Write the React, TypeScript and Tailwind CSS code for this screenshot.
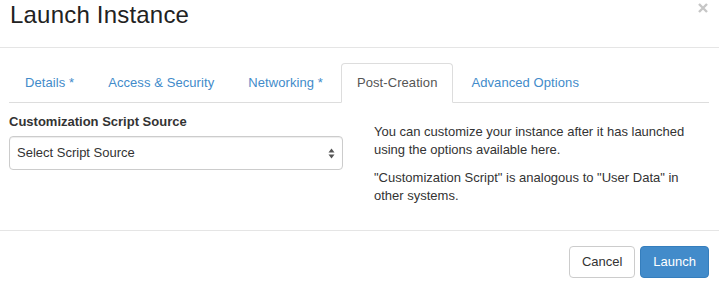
import { useState } from "react";

const tabs = [
  { id: "details", label: "Details *" },
  { id: "access", label: "Access & Security" },
  { id: "networking", label: "Networking *" },
  { id: "post", label: "Post-Creation" },
  { id: "advanced", label: "Advanced Options" },
];

export default function App() {
  const [active, setActive] = useState("post");

  return (
    <div
      className="w-[719px] h-[289px] bg-white text-[#333] text-[13px] leading-[18px] flex flex-col"
      style={{ fontFamily: '"Liberation Sans", Arial, sans-serif' }}
    >
      {/* header */}
      <div className="h-[48px] border-b border-[#e5e5e5] flex items-start justify-between pl-[10px] pr-[11px]">
        <h4 className="pt-[2px] text-[24px] leading-[26px] text-[#222] tracking-[0.2px]">Launch Instance</h4>
        <button aria-label="Close" className="mt-[3px]">
          <svg width="10" height="10" viewBox="0 0 10 10">
            <path d="M1 1 L9 9 M9 1 L1 9" stroke="#c6c6c6" strokeWidth="2.4" strokeLinecap="butt" />
          </svg>
        </button>
      </div>

      {/* body */}
      <div className="h-[182px] pt-[15px] pl-[9px] pr-[10px]">
        <ul className="flex border-b border-[#ddd] h-[40px]">
          {tabs.map((tab) => (
            <li key={tab.id} className="-mb-px mr-[2px]">
              <button
                onClick={() => setActive(tab.id)}
                className={`block h-[40px] px-[15px] py-[9px] leading-[20px] tracking-[0.08px] rounded-t-[4px] border ${
                  active === tab.id
                    ? "border-[#ddd] border-b-white bg-white text-[#555]"
                    : "border-transparent text-[#428bca]"
                }`}
              >
                {tab.label}
              </button>
            </li>
          ))}
        </ul>

        <div className="flex pt-[10px]">
          <div className="w-[334px]">
            <label className="block font-bold mb-[5px]">Customization Script Source</label>
            <div className="h-[34px] border border-[#ccc] rounded-[4px] shadow-[inset_0_1px_1px_rgba(0,0,0,0.075)] flex items-center justify-between pl-[7px] pr-[6px]">
              <span className="text-[#333]">Select Script Source</span>
              <svg width="7" height="11" viewBox="0 0 7 11" className="mr-[1px]">
                <path d="M3.5 0.5 L6.5 4.5 L0.5 4.5 Z" fill="#555" />
                <path d="M3.5 10.5 L6.5 6.5 L0.5 6.5 Z" fill="#555" />
              </svg>
            </div>
          </div>
          <div className="ml-[31px] pt-[10px] flex-1">
            <p className="mb-[10px]">
              You can customize your instance after it has launched
              <br />
              using the options available here.
            </p>
            <p>
              "Customization Script" is analogous to "User Data" in
              <br />
              other systems.
            </p>
          </div>
        </div>
      </div>

      {/* footer */}
      <div className="border-t border-[#e5e5e5] pt-[15px] pr-[10px] flex justify-end gap-[5px]">
        <button className="h-[32px] px-[12px] border border-[#ccc] rounded-[4px] bg-white text-[#333]">
          Cancel
        </button>
        <button className="h-[32px] px-[12px] border border-[#357ebd] rounded-[4px] bg-[#428bca] text-white">
          Launch
        </button>
      </div>
    </div>
  );
}
